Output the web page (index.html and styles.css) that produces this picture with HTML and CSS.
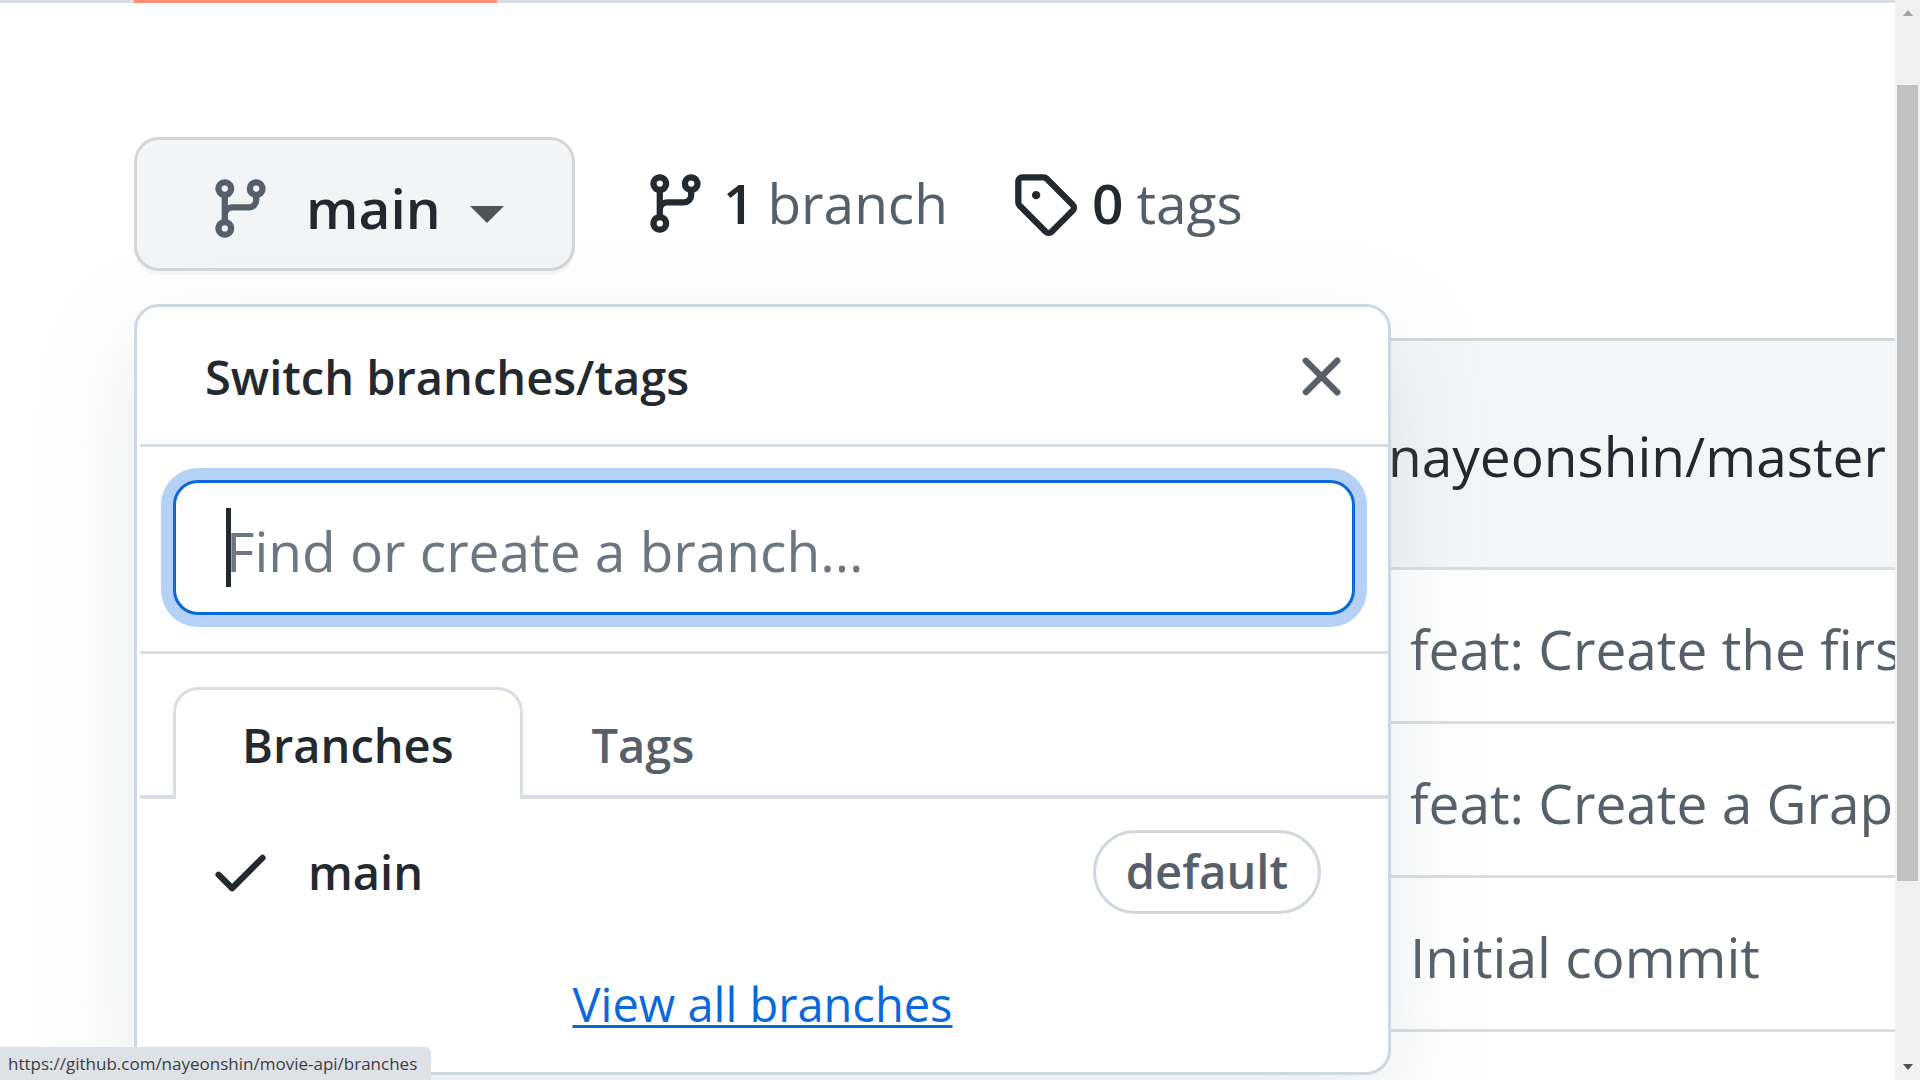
FILE: index.html
```html
<!DOCTYPE html>
<html lang="en">
<head>
<meta charset="utf-8">
<title>movie-api branches</title>
<link rel="stylesheet" href="styles.css">
</head>
<body>
<svg class="sprite" aria-hidden="true">
  <symbol id="git-branch" viewBox="0 0 16 16"><path fill-rule="evenodd" d="M11.75 2.5a.75.75 0 100 1.5.75.75 0 000-1.5zm-2.25.75a2.25 2.25 0 113 2.122V6A2.5 2.5 0 0110 8.5H6a1 1 0 00-1 1v1.128a2.251 2.251 0 11-1.5 0V5.372a2.25 2.25 0 111.5 0v1.836A2.492 2.492 0 016 7h4a1 1 0 001-1v-.628A2.25 2.25 0 019.5 3.25zM4.25 12a.75.75 0 100 1.5.75.75 0 000-1.5zM3.5 3.25a.75.75 0 111.5 0 .75.75 0 01-1.5 0z"/></symbol>
  <symbol id="tag" viewBox="0 0 16 16"><path fill-rule="evenodd" d="M2.5 7.775V2.75a.25.25 0 01.25-.25h5.025a.25.25 0 01.177.073l6.25 6.25a.25.25 0 010 .354l-5.025 5.025a.25.25 0 01-.354 0l-6.25-6.25a.25.25 0 01-.073-.177zm-1.5 0V2.75C1 1.784 1.784 1 2.75 1h5.025c.464 0 .91.184 1.238.513l6.25 6.25a1.75 1.75 0 010 2.474l-5.026 5.026a1.75 1.75 0 01-2.474 0l-6.25-6.25A1.75 1.75 0 011 7.775zM6 5a1 1 0 100 2 1 1 0 000-2z"/></symbol>
  <symbol id="x" viewBox="0 0 16 16"><path fill-rule="evenodd" d="M3.72 3.72a.75.75 0 011.06 0L8 6.94l3.22-3.22a.75.75 0 111.06 1.06L9.06 8l3.22 3.22a.75.75 0 11-1.06 1.06L8 9.06l-3.22 3.22a.75.75 0 01-1.06-1.06L6.94 8 3.72 4.78a.75.75 0 010-1.06z"/></symbol>
  <symbol id="check" viewBox="0 0 16 16"><path fill-rule="evenodd" d="M13.78 4.22a.75.75 0 010 1.06l-7.25 7.25a.75.75 0 01-1.06 0L2.22 9.28a.75.75 0 011.06-1.06L6 10.94l6.72-6.72a.75.75 0 011.06 0z"/></symbol>
</svg>
<div class="page">
  <nav class="repo-nav"><span class="repo-nav-selected"></span></nav>
  <main class="content">
    <div class="toolbar">
      <div class="picker">
        <button class="picker-button" type="button">
          <svg class="icon icon-muted" aria-hidden="true"><use href="#git-branch"/></svg>
          <span>main</span>
          <span class="caret"></span>
        </button>
        <section class="popover">
          <header class="popover-header">
            <h2 class="popover-title">Switch branches/tags</h2>
            <button class="close" type="button" aria-label="Close"><svg class="icon" aria-hidden="true"><use href="#x"/></svg></button>
          </header>
          <div class="filter">
            <input class="filter-input" type="text" placeholder="Find or create a branch..." aria-label="Find or create a branch">
            <span class="text-cursor"></span>
          </div>
          <div class="tabs" role="tablist">
            <button class="tab tab-selected" type="button" role="tab" aria-selected="true">Branches</button>
            <button class="tab" type="button" role="tab" aria-selected="false">Tags</button>
          </div>
          <a class="branch" href="#main">
            <svg class="icon" aria-hidden="true"><use href="#check"/></svg>
            <span class="branch-name">main</span>
            <span class="label">default</span>
          </a>
          <footer class="popover-footer"><a class="all-link" href="#branches">View all branches</a></footer>
        </section>
      </div>
      <a class="stat" href="#branches"><svg class="icon" aria-hidden="true"><use href="#git-branch"/></svg><strong class="count">1</strong><span>branch</span></a>
      <a class="stat" href="#tags"><svg class="icon" aria-hidden="true"><use href="#tag"/></svg><strong class="count">0</strong><span>tags</span></a>
    </div>
    <table class="files">
      <colgroup><col class="col-name"><col></colgroup>
      <thead><tr><th></th><th class="latest" scope="col">nayeonshin/master</th></tr></thead>
      <tbody>
        <tr><td></td><td class="message">feat: Create the firs</td></tr>
        <tr><td></td><td class="message">feat: Create a Grap</td></tr>
        <tr><td></td><td class="message">Initial commit</td></tr>
        <tr><td></td><td class="message"></td></tr>
      </tbody>
    </table>
  </main>
</div>
<div class="scrollbar" aria-hidden="true">
  <span class="arrow arrow-up"></span>
  <span class="thumb"></span>
  <span class="arrow arrow-down"></span>
</div>
<div class="status">https://github.com/nayeonshin/movie-api/branches</div>
</body>
</html>
```
FILE: styles.css
```css
* { box-sizing: border-box; }

body {
  margin: 0;
  height: 100vh;
  overflow: hidden;
  display: grid;
  grid-template-columns: minmax(0, 1fr) 25px;
  background: #fff;
  color: #24292f;
  font-family: "Open Sans", "Noto Sans", sans-serif;
  font-size: 55px;
  line-height: 84px;
}

button, input { font: inherit; color: inherit; }
a { color: inherit; text-decoration: none; }

.sprite { position: absolute; width: 0; height: 0; }
.icon { flex: none; display: block; width: 67px; height: 67px; fill: currentColor; }
.icon-muted { color: #57606a; }

.page { height: 100vh; overflow: hidden; }

.repo-nav { display: flex; height: 3px; padding-left: 134px; background: #d8dee4; }
.repo-nav-selected { width: 363px; background: #fd8c73; }

.content { padding: 134px 0 0 134px; }

.toolbar { display: flex; align-items: flex-start; height: 201px; }

.picker { position: relative; margin-right: 67px; }

.picker-button {
  display: flex;
  align-items: center;
  width: 441px;
  height: 134px;
  padding: 8px 0 0 70px;
  border: 3px solid #d3d5d7;
  border-radius: 25px;
  background: #f3f4f6;
  box-shadow: 0 4px 0 rgba(27, 31, 36, 0.04), inset 0 4px 0 rgba(255, 255, 255, 0.25);
  font-weight: 600;
}
.picker-button .icon { margin-right: 32px; }

.caret {
  margin: 12px 0 0 29px;
  border: 17px solid transparent;
  border-top: 17px solid #4f5257;
  border-bottom: 0;
}

.stat { display: flex; align-items: center; height: 132px; color: #57606a; margin-right: 63px; }
.stat .icon { color: #24292f; }
.count { margin: 0 13px 0 14px; color: #24292f; font-weight: 600; }

.popover {
  position: absolute;
  z-index: 2;
  top: 167px;
  left: 0;
  width: 1257px;
  border: 3px solid #d0d7de;
  border-radius: 25px;
  background: #fff;
  box-shadow: 0 33px 100px rgba(140, 149, 159, 0.2);
  font-size: 47px;
}

.popover-header {
  display: flex;
  align-items: center;
  justify-content: space-between;
  height: 140px;
  margin-left: 3px;
  padding: 2px 33px 0 65px;
  border-bottom: 3px solid #d8dee4;
}
.popover-title { margin: 0; font-size: 47px; font-weight: 600; }
.close { padding: 0; border: 0; background: none; color: #57606a; }

.filter {
  position: relative;
  margin-left: 3px;
  padding: 33px 33px 36px;
  border-bottom: 3px solid #d8dee4;
}
.filter-input {
  display: block;
  width: 100%;
  height: 135px;
  padding: 6px 50px 0;
  border: 3px solid #0969da;
  border-radius: 25px;
  outline: 0;
  background: #fff;
  box-shadow: 0 0 0 12px #b5d1f5;
  font-size: 55px;
}
.filter-input::placeholder { color: #6e7781; opacity: 1; }
.text-cursor { position: absolute; top: 61px; left: 86px; width: 5px; height: 79px; background: #24292f; }

.tabs { display: flex; margin-left: 3px; padding: 33px 33px 0; box-shadow: inset 0 -4px 0 #d8dee4; }
.tab {
  height: 112px;
  padding: 0 66px;
  border: 3px solid transparent;
  border-bottom: 0;
  background: none;
  color: #57606a;
  font-weight: 600;
}
.tab-selected {
  border-color: #d8dee4;
  border-radius: 25px 25px 0 0;
  background: #fff;
  color: #24292f;
}

.branch { display: flex; align-items: center; height: 145px; padding: 0 67px 0 70px; font-weight: 600; }
.branch-name { flex: 1; margin-left: 34px; }
.label {
  height: 84px;
  padding: 0 30px;
  border: 3px solid #d0d7de;
  border-radius: 42px;
  color: #57606a;
  line-height: 76px;
}

.popover-footer { padding: 18px 0 26px; text-align: center; }
.all-link {
  color: #0969da;
  text-decoration: underline;
  text-decoration-thickness: 3px;
  text-underline-offset: 3px;
}

.files { width: 100%; table-layout: fixed; border-collapse: separate; border-spacing: 0; }
.col-name { width: 1254px; }
.files th { height: 229px; border-top: 3px solid #d0d7de; background: #f4f5f7; }
.files td { height: 154px; border-top: 3px solid #d8dee4; }
.files .latest { padding: 4px 0 0; font-weight: 400; text-align: left; white-space: nowrap; }
.files .message { padding: 6px 0 0 22px; color: #57606a; white-space: nowrap; }

.scrollbar {
  display: flex;
  flex-direction: column;
  align-items: center;
  height: 100vh;
  padding: 10px 0;
  background: #f0f0f0;
}
.thumb { width: 21px; height: 796px; margin: 69px 0 auto; background: #c1c1c1; }
.arrow { border: 5px solid transparent; }
.arrow-up { border-top: 0; border-bottom: 6px solid #a3a3a3; }
.arrow-down { border-bottom: 0; border-top: 6px solid #505050; }

.status {
  position: fixed;
  z-index: 3;
  left: 0;
  bottom: 0;
  height: 33px;
  padding: 0 14px 0 8px;
  border-radius: 0 6px 0 0;
  background: #dee1e6;
  color: #3c4043;
  font-size: 17px;
  line-height: 34px;
}
```
